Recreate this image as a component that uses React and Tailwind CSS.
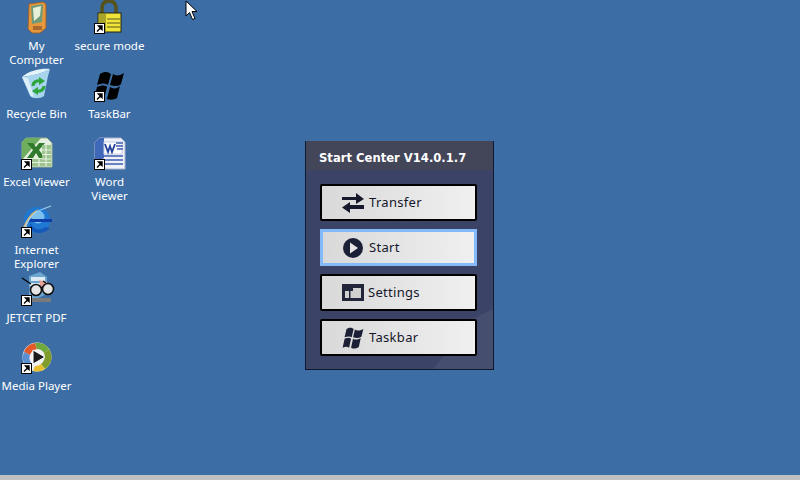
const Arrow = () => (
  <svg className="absolute left-0 top-[23px]" width="11" height="11" viewBox="0 0 11 11">
    <rect x="0.5" y="0.5" width="10" height="10" fill="#fff" stroke="#000" />
    <path d="M3 8.5L7 4.5M4.5 3H8V6.5Z" stroke="#000" strokeWidth="1.4" fill="#000" />
  </svg>
);

const Pda = () => (
  <svg width="32" height="34" viewBox="0 0 32 34">
    <path d="M8 4L22 2L25 4L25 28L19 33L11 33L7 29Z" fill="#e8983c" stroke="#96602e" />
    <path d="M10 6L22 4L21 22L11 24Z" fill="#6f9a7a" />
    <path d="M12 8L20 6L19 16L13 21Z" fill="#e6f0d8" />
    <rect x="12" y="26" width="9" height="4" fill="#a86a30" />
  </svg>
);
const Lock = () => (
  <svg width="32" height="34" viewBox="0 0 32 34">
    <path d="M8 14V9C8 3 11 1 15 1C19 1 22 3 22 9V14" fill="none" stroke="#55521c" strokeWidth="3.5" />
    <rect x="4" y="13" width="23" height="19" fill="#efe53a" stroke="#23210c" />
    <path d="M5 14H12V31H5Z" fill="#a8a32a" />
    <path d="M13 19H26M13 23H26M13 27H26" stroke="#5a5718" strokeWidth="1.2" />
  </svg>
);
const Bin = () => (
  <svg width="32" height="34" viewBox="0 0 32 34">
    <path d="M1 9C10 8 20 6 29 1L27 8L23 28C19 31 12 31 9 28Z" fill="#a8d4ee" />
    <path d="M1 9C10 8 20 6 29 1C22 0 8 2 1 9Z" fill="#e2f2fa" />
    <path d="M1 9L10 28L13 29L7 10Z" fill="#dceef8" />
    <path d="M12 18C12 14 16 12 20 13" fill="none" stroke="#2da53a" strokeWidth="3" />
    <path d="M18 9L24 13L18 17Z" fill="#2da53a" />
    <path d="M23 18C23 22 19 24 15 23" fill="none" stroke="#2da53a" strokeWidth="3" />
    <path d="M17 19L11 23L17 27Z" fill="#2da53a" />
  </svg>
);
const WinLogo = () => (
  <svg width="32" height="34" viewBox="0 0 32 34">
    <path d="M6 6C11 3 14 4 17 6L14 17C11 15 8 15 3 17Z" fill="#000" />
    <path d="M19 6C22 8 26 8 30 5L27 16C24 19 20 18 16 17Z" fill="#000" />
    <path d="M3 19C8 17 11 17 13 19L10 31C7 29 4 29 0 31Z" fill="#000" />
    <path d="M16 19C19 21 23 21 26 18L23 30C20 32 16 32 13 31Z" fill="#000" />
  </svg>
);
const Excel = () => (
  <svg width="32" height="34" viewBox="0 0 32 34">
    <path d="M5 2H26L31 7V31H1V6Z" fill="#e6efe0" stroke="#94b088" />
    <path d="M1 6L5 2H20L1 24Z" fill="#6fae5e" />
    <path d="M6 7H12L15 11L18 7H24L18 14L24 22H18L15 17L12 22H6L12 14Z" fill="#2f7a2c" />
    <path d="M21 9H30V30H11V23H21Z" fill="#9dc58e" />
    <path d="M11 26.500H30M21 14H30M21 18.500H30M21 23H30M25 9V30M18 23V30" stroke="#e6efe0" strokeWidth="1.2" />
  </svg>
);
const Word = () => (
  <svg width="32" height="34" viewBox="0 0 32 34">
    <path d="M5 2H27L31 6V33H1V6Z" fill="#eef1f7" stroke="#aab4cf" />
    <path d="M1 6L5 2H10V22L1 28Z" fill="#3f68b8" />
    <rect x="10" y="6" width="18" height="12" fill="#fff" stroke="#c5cfe6" />
    <path d="M11 8L14 16L16 10L18 16L21 8" fill="none" stroke="#22409a" strokeWidth="1.8" />
    <path d="M22 7H29M22 10H29M23 13H29M10 20H29M7 24H29M7 28H29" stroke="#3f5cae" strokeWidth="1.3" />
  </svg>
);
const Ie = () => (
  <svg width="32" height="34" viewBox="0 0 32 34">
    <circle cx="16" cy="16" r="13" fill="#1f78d1" />
    <circle cx="17" cy="13" r="6.5" fill="#7cc0ee" />
    <rect x="7" y="15" width="24" height="3" fill="#0d3fa8" />
    <path d="M10 19C12 26 20 27 24 23L29 24C25 30 13 31 8 24Z" fill="#1459b8" />
    <path d="M1 32C0 24 8 8 18 5C10 10 5 20 5 28Z" fill="#e4b56a" />
    <path d="M3 27C5 18 12 8 22 5L30 2" fill="none" stroke="#9bd0f0" strokeWidth="1.2" />
  </svg>
);
const Pdf = () => (
  <svg width="34" height="34" viewBox="0 0 34 34">
    <path d="M8 4L19 0L26 5V22L8 30Z" fill="#6ba6d0" />
    <path d="M10 5H24V9H10ZM9 11H24V14H9Z" fill="#dcebf4" />
    <path d="M8 26H30V30H8Z" fill="#7a7a7a" />
    <path d="M18 8L26 10L28 18L20 18Z" fill="#e2a29a" />
    <path d="M1 6L10 12" stroke="#000" strokeWidth="1.2" />
    <circle cx="15" cy="18" r="5.5" fill="#e5e5e5" stroke="#111" strokeWidth="1.6" />
    <circle cx="27" cy="17" r="5.5" fill="#e5e5e5" stroke="#111" strokeWidth="1.6" />
    <path d="M20 16L22 15M22 9L25 11" stroke="#111" strokeWidth="1.4" />
  </svg>
);
const Wmp = () => (
  <svg width="32" height="34" viewBox="0 0 32 34">
    <circle cx="16" cy="17" r="14.5" fill="#f2f2f2" />
    <path d="M3 12A14 14 0 0 1 14 3L16 9A9 9 0 0 0 9 15Z" fill="#e2592a" />
    <path d="M14 3A14 14 0 0 1 28 9L23 13A9 9 0 0 0 16 9Z" fill="#6fa83c" />
    <path d="M28 9A14 14 0 0 1 24 29L20 24A9 9 0 0 0 23 13Z" fill="#7f9c2c" />
    <path d="M24 29A14 14 0 0 1 12 31L14 26A9 9 0 0 0 20 24Z" fill="#e8c02f" />
    <path d="M3 12A14 14 0 0 0 6 27L10 23A9 9 0 0 1 9 15Z" fill="#5a8fd0" />
    <path d="M12 10L24 17L12 24Z" fill="#1c1c1c" stroke="#fff" />
  </svg>
);

const rows1 = [
  { label: "My Computer", icon: <Pda /> },
  { label: "Recycle Bin", icon: <Bin /> },
  { label: "Excel Viewer", icon: <Excel />, arrow: true },
  { label: "Internet Explorer", icon: <Ie />, arrow: true },
  { label: "JETCET PDF", icon: <Pdf />, arrow: true },
  { label: "Media Player", icon: <Wmp />, arrow: true },
];
const rows2 = [
  { label: "secure mode", icon: <Lock />, arrow: true },
  { label: "TaskBar", icon: <WinLogo />, arrow: true },
  { label: "Word\nViewer", icon: <Word />, arrow: true },
];

const DeskIcon = ({ label, icon, arrow }) => (
  <div className="h-[68px] w-[75px] flex flex-col items-center">
    <div className="relative w-[32px] h-[39px] shrink-0">
      {icon}
      {arrow && <Arrow />}
    </div>
    <div className="text-white text-center text-[11.5px] leading-[14px] w-[72px] whitespace-pre-line">{label}</div>
  </div>
);

const Btn = ({ icon, label, active }) => (
  <div
    className={
      "h-[37px] w-[157px] flex items-center bg-gradient-to-r from-[#d9d9d9] to-[#f0f0f0] text-[13px] tracking-[0.3px] text-[#14182c] " +
      (active ? "border-[3px] border-[#85bafa]" : "border-[2px] border-black rounded-[2px]")
    }
  >
    {icon}
    <span>{label}</span>
  </div>
);

export default function App() {
  return (
    <div
      className="relative w-[800px] h-[480px] overflow-hidden bg-[#3c6ea5] flex flex-col"
      style={{ fontFamily: '"Noto Sans", sans-serif' }}
    >
      <div className="flex-1 flex">
        <div className="w-[73px] shrink-0 flex flex-col -ml-[1px]">
          {rows1.map((r) => <DeskIcon key={r.label} {...r} />)}
        </div>
        <div className="w-[75px] shrink-0 flex flex-col">
          {rows2.map((r) => <DeskIcon key={r.label} {...r} />)}
        </div>
        <div className="flex-1 flex flex-col items-start pt-[141px] pl-[158px]">
          <div className="w-[189px] h-[229px] bg-[#3b4466] border border-[#10182c] border-t-0 relative overflow-hidden">
            <svg className="absolute right-0 bottom-0 opacity-[0.05]" width="70" height="70" viewBox="0 0 70 70">
              <path d="M10 70L50 20L70 10V70Z" fill="#fff" />
            </svg>
            <div
              className="h-[29px] -mx-px bg-[#434558] text-white font-bold text-[11.6px] flex items-center pl-[14px] pt-[6px] relative"
              style={{ fontFamily: '"DejaVu Sans", sans-serif' }}
            >
              Start Center V14.0.1.7
            </div>
            <div className="relative flex flex-col gap-[8px] pt-[14px] pl-[14px]">
              <Btn
                label="Transfer"
                icon={
                  <svg className="ml-[19px] mr-[3px]" width="25" height="24" viewBox="0 0 25 24">
                    <path d="M1 6H15V2L23 8L15 13V9H1ZM23 14H9V11L1 16.500L9 22V18H23Z" fill="#161a2c" />
                  </svg>
                }
              />
              <Btn
                active
                label="Start"
                icon={
                  <svg className="ml-[20px] mr-[6px]" width="20" height="20" viewBox="0 0 20 20">
                    <circle cx="10" cy="10" r="10" fill="#1c2036" />
                    <path d="M7 4.500L15 10L7 15.500Z" fill="#e5e5e5" />
                  </svg>
                }
              />
              <Btn
                label="Settings"
                icon={
                  <svg className="ml-[20px] mr-[4px]" width="22" height="17" viewBox="0 0 22 17">
                    <rect width="22" height="17" fill="#23263a" />
                    <rect x="3" y="4" width="16" height="10" fill="#d0d0d0" />
                    <rect x="3" y="4" width="8" height="3" fill="#23263a" />
                    <rect x="7" y="7" width="1.500" height="7" fill="#23263a" />
                  </svg>
                }
              />
              <Btn
                label="Taskbar"
                icon={
                  <svg className="ml-[20px] mr-[5px]" width="22" height="22" viewBox="0 0 32 34">
                    <path d="M6 3C11 0 14 1 17 3L14 16C11 14 8 14 3 16Z" fill="#1c2036" />
                    <path d="M19 4C22 6 26 6 32 3L29 15C24 18 20 17 16 16Z" fill="#1c2036" />
                    <path d="M3 18C8 16 11 16 13 18L10 32C7 30 4 30 0 32Z" fill="#1c2036" />
                    <path d="M16 18C19 20 23 20 28 17L25 31C20 34 16 34 13 32Z" fill="#1c2036" />
                  </svg>
                }
              />
            </div>
          </div>
        </div>
      </div>
      <div className="h-[5px] bg-[#c0c0c0] shrink-0" />
      <svg className="absolute left-[185px] top-[0px]" width="13" height="21" viewBox="0 0 13 21">
        <path d="M1 1V16L4.500 12.500L7.500 19.500L10 18.500L7 11.500H12Z" fill="#fff" stroke="#000" />
      </svg>
    </div>
  );
}
